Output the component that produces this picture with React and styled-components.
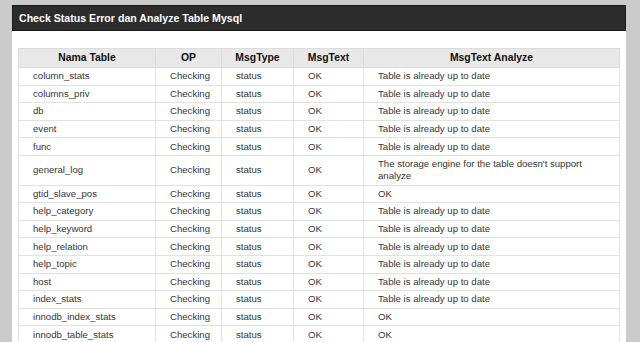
import styled, { createGlobalStyle } from "styled-components";

const Global = createGlobalStyle`
    body{
        margin: 0;
        padding: 5px 14px 0 12px;
        background-color: #cbcbcb;
        font-family: "Liberation Sans", Arial, sans-serif;
        overflow: hidden;
    }
`
const Panel = styled.div`
    width: 614px;
    background-color: #ffffff;
    height: 400px;
`
const TitleBar = styled.div`
    height: 26px;
    background-color: #2c2c2c;
    border: 1px solid #1a1a1a;
    box-sizing: border-box;
    color: #ffffff;
    font-weight: bold;
    font-size: 10.6px;
    display: flex;
    align-items: center;
    padding-left: 6px;
`
const Body = styled.div`
    padding: 17px 7px 0 6px;
`
const Table = styled.table`
    border-collapse: collapse;
    width: 601px;
    table-layout: fixed;
    font-size: 9.6px;
    color: #363636;
`
const Th = styled.th`
    background-color: #e8e8e8;
    border: 1px solid #dcdcdc;
    font-size: 10.4px;
    color: #111111;
    font-weight: bold;
    height: 18px;
    padding: 0;
    line-height: 14px;
    text-align: center;
`
const Td = styled.td`
    border: 1px solid #e2e2e2;
    padding: 2.3px 14px;
    line-height: 12px;
    text-align: ${p => p.$center ? "center" : "left"};
    vertical-align: middle;
`

const upToDate = "Table is already up to date"
const rows = [
    ["column_stats", upToDate],
    ["columns_priv", upToDate],
    ["db", upToDate],
    ["event", upToDate],
    ["func", upToDate],
    ["general_log", "The storage engine for the table doesn't support analyze"],
    ["gtid_slave_pos", "OK"],
    ["help_category", upToDate],
    ["help_keyword", upToDate],
    ["help_relation", upToDate],
    ["help_topic", upToDate],
    ["host", upToDate],
    ["index_stats", upToDate],
    ["innodb_index_stats", "OK"],
    ["innodb_table_stats", "OK"],
]

export default function App(){
    return(
        <>
            <Global/>
            <Panel>
                <TitleBar>Check Status Error dan Analyze Table Mysql</TitleBar>
                <Body>
                    <Table>
                        <colgroup>
                            <col style={{width: 137}}/>
                            <col style={{width: 66}}/>
                            <col style={{width: 72}}/>
                            <col style={{width: 70}}/>
                            <col style={{width: 256}}/>
                        </colgroup>
                        <thead>
                            <tr>
                                <Th>Nama Table</Th>
                                <Th>OP</Th>
                                <Th>MsgType</Th>
                                <Th>MsgText</Th>
                                <Th>MsgText Analyze</Th>
                            </tr>
                        </thead>
                        <tbody>
                            {rows.map(([name, analyze]) => (
                                <tr key={name}>
                                    <Td>{name}</Td>
                                    <Td $center>Checking</Td>
                                    <Td>status</Td>
                                    <Td>OK</Td>
                                    <Td>{analyze}</Td>
                                </tr>
                            ))}
                        </tbody>
                    </Table>
                </Body>
            </Panel>
        </>
    )
}
